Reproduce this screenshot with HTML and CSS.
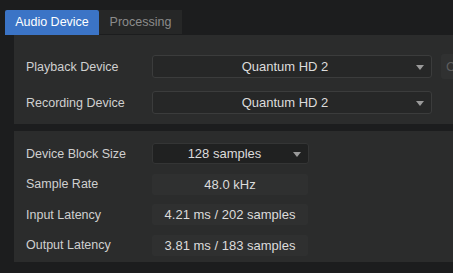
FILE: index.html
```html
<!DOCTYPE html>
<html lang="en">
<head>
    <meta charset="UTF-8">
    <meta name="viewport" content="width=device-width, initial-scale=1.0">
    <title>Audio Setup</title>
    <link rel="stylesheet" href="styles.css">
</head>
<body>
    <div class="tab-bar">
        <div class="tab active">Audio Device</div>
        <div class="tab">Processing</div>
    </div>

    <div class="panel panel-devices">
        <div class="row">
            <span class="label">Playback Device</span>
            <div class="dropdown wide">
                <span class="dropdown-text">Quantum HD 2</span>
                <span class="arrow"></span>
            </div>
            <div class="side-button">C</div>
        </div>
        <div class="row">
            <span class="label">Recording Device</span>
            <div class="dropdown wide">
                <span class="dropdown-text">Quantum HD 2</span>
                <span class="arrow"></span>
            </div>
        </div>
    </div>

    <div class="panel panel-info">
        <div class="row small">
            <span class="label">Device Block Size</span>
            <div class="dropdown narrow dark">
                <span class="dropdown-text">128 samples</span>
                <span class="arrow"></span>
            </div>
        </div>
        <div class="row small">
            <span class="label">Sample Rate</span>
            <div class="value">48.0 kHz</div>
        </div>
        <div class="row small">
            <span class="label">Input Latency</span>
            <div class="value">4.21 ms / 202 samples</div>
        </div>
        <div class="row small">
            <span class="label">Output Latency</span>
            <div class="value">3.81 ms / 183 samples</div>
        </div>
    </div>
</body>
</html>
```

FILE: styles.css
```css
body {
    font-family: "Liberation Sans", Arial, sans-serif;
    background-color: #1c1d1e;
    margin: 0;
    padding: 0;
    width: 453px;
    height: 273px;
    overflow: hidden;
    color: #d2d2d2;
}

.tab-bar {
    display: flex;
    align-items: flex-start;
    padding: 10px 0 0 5px;
    height: 25px;
}

.tab {
    flex-shrink: 0;
    white-space: nowrap;
    height: 24px;
    line-height: 24px;
    width: 83px;
    text-align: center;
    font-size: 12.5px;
    color: #8c8c8c;
    background-color: #262727;
}

.tab.active {
    width: 94px;
    height: 25px;
    line-height: 25px;
    background-color: #3b74c6;
    color: #ffffff;
    border-radius: 2px 2px 0 0;
}

.panel {
    margin-left: 14px;
    background-color: #2b2c2c;
    display: flex;
    flex-direction: column;
    padding-left: 12px;
}

.panel-devices {
    height: 89px;
    box-sizing: border-box;
    padding-top: 20px;
    gap: 13px;
}

.panel-info {
    margin-top: 7px;
    height: 131px;
    box-sizing: border-box;
    padding-top: 12px;
    gap: 9.5px;
}

.row {
    display: flex;
    align-items: center;
    height: 23px;
}

.row.small {
    height: 21px;
}

.label {
    flex-shrink: 0;
    width: 126px;
    white-space: nowrap;
    font-size: 12.5px;
    color: #d0d0d0;
}

.dropdown {
    flex-shrink: 0;
    position: relative;
    height: 100%;
    box-sizing: border-box;
    border: 1px solid #3b3c3c;
    border-radius: 3px;
    background-color: #262727;
    display: flex;
    align-items: center;
    justify-content: center;
    font-size: 13px;
    color: #dcdcdc;
}

.dropdown.wide {
    width: 280px;
    padding-right: 14px;
}

.dropdown.narrow {
    width: 157px;
    padding-right: 12px;
}

.dropdown.dark {
    background-color: #202121;
    border-color: #343535;
}

.arrow {
    position: absolute;
    right: 7px;
    top: 50%;
    margin-top: -2px;
    width: 0;
    height: 0;
    border-left: 4px solid transparent;
    border-right: 4px solid transparent;
    border-top: 5px solid #9a9a9a;
}

.side-button {
    flex-shrink: 0;
    margin-left: 9px;
    width: 20px;
    height: 25px;
    border-radius: 3px;
    background-color: #303131;
    color: #5e5e5e;
    font-size: 13px;
    line-height: 25px;
    padding-left: 5px;
    box-sizing: border-box;
}

.value {
    flex-shrink: 0;
    width: 156px;
    height: 100%;
    background-color: #2f3030;
    border-radius: 2px;
    display: flex;
    align-items: center;
    justify-content: center;
    font-size: 13px;
    color: #dcdcdc;
}
```
